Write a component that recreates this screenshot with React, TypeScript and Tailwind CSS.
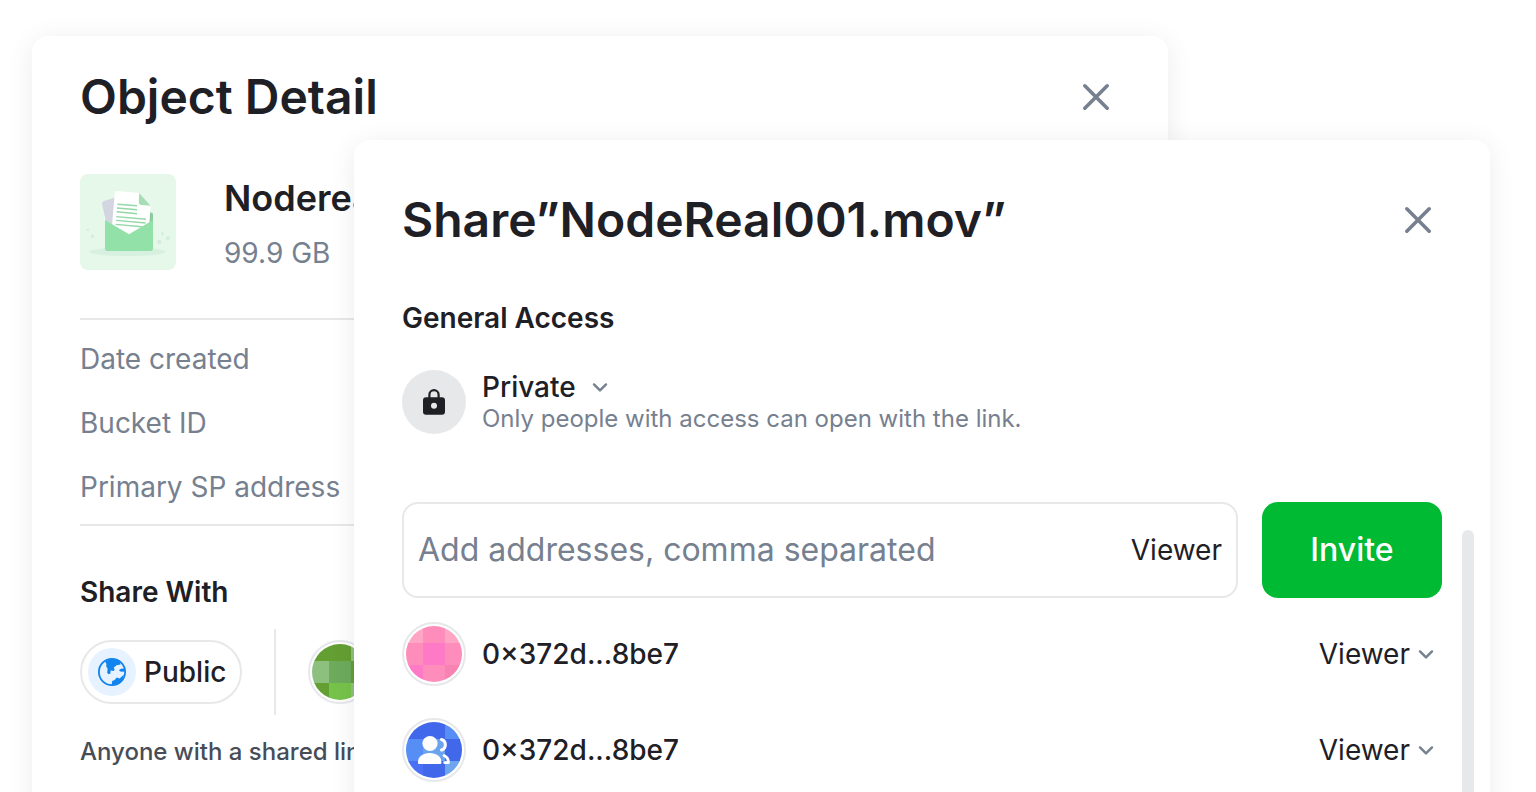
import { useId } from "react";
import type { ReactNode } from "react";

function CloseButton({ label }: { label: string }) {
  return (
    <button type="button" aria-label={label} className="flex size-12 shrink-0 items-center justify-center text-[#76808F]">
      <svg viewBox="0 0 48 48" className="size-12" fill="none" stroke="currentColor" strokeWidth="3.6" strokeLinecap="round">
        <path d="M12.800 12.800 35.200 35.200M35.200 12.800 12.800 35.200" />
      </svg>
    </button>
  );
}

function Chevron() {
  return (
    <svg viewBox="0 0 16 16" className="pointer-events-none col-start-1 row-start-1 size-4 justify-self-end text-[#76808F]" fill="none" stroke="currentColor" strokeWidth="2.4" strokeLinecap="round" strokeLinejoin="round">
      <path d="M2 5.400 8 11.400 14 5.400" />
    </svg>
  );
}

function FileThumbnail() {
  return (
    <svg viewBox="0 0 96 96" className="size-24 shrink-0 rounded-lg bg-[#E6F8EA]" aria-hidden="true">
      <ellipse cx="47.7" cy="77.8" rx="38" ry="4.4" fill="#D8F0DF" />
      <g fill="#D3EFDB">
        <circle cx="7.7" cy="55.8" r="1.3" />
        <circle cx="12.4" cy="62.3" r="1.8" />
        <circle cx="82.4" cy="59.7" r="1.6" />
        <circle cx="87.7" cy="64.2" r="2" />
        <circle cx="79.3" cy="68" r="2.3" />
      </g>
      <path d="M60 38.5H71q2 0 2 2V60H60Z" fill="#8CCB9F" />
      <path d="M23.8 27 35 23.7V52L26 47.5 22 30Q21.5 27.8 23.8 27Z" fill="#D3D6E0" />
      <path d="M36.6 17 59 19 70.6 31.5 69.2 52 49.5 62 32 52 34.8 18.5Q35 17 36.6 17Z" fill="#fff" />
      <path d="M59.2 19 70.6 31.8 61.5 31Q58.7 30.5 58.8 28Z" fill="#A5DDB5" />
      <path d="M37.4 30.2 57 31.800M37 34 57 35.800M36.6 37.8 57 39.800M36.2 42.6 66 45.2M36 46.4 65.6 49M35.6 50.4 62 52.8" stroke="#93D8A6" strokeWidth="1.4" />
      <path d="M25 46 49 60.3 73 46V75q0 2-2 2H27q-2 0-2-2Z" fill="#92E1A8" />
    </svg>
  );
}

function GlobeIcon() {
  return (
    <span className="flex size-12 items-center justify-center rounded-full bg-[#E6F2FF]">
      <svg viewBox="0 0 28 28" className="size-7" aria-hidden="true">
        <circle cx="14" cy="14" r="13.100" fill="none" stroke="#1184EE" strokeWidth="1.800" />
        <path fill="#1184EE" d="M7 3.500 8.400 6 8.200 8.500 9.600 10.500 9.200 15 10.800 16.200 12.400 15.600 12.600 12.400 15.800 13 16.600 11.600 15.800 9.600 18.600 7.200 22.500 6.600 22 3 13 .5ZM20.800 12.200 23 13.700 27 13.600 26.600 10.600 23 10.800ZM13.600 27.500 14.200 23 16.600 22 18.800 19.600 21.600 20.400 26 16.500 24 23 19 26.500Z" />
      </svg>
    </span>
  );
}

function LockIcon() {
  return (
    <span className="flex size-16 shrink-0 items-center justify-center rounded-full bg-[#E6E8EA]">
      <svg viewBox="0 0 32 32" className="size-8" aria-hidden="true">
        <path d="M11.400 13V8.800a4.600 4.600 0 0 1 9.200 0V13" fill="none" stroke="#1E2026" strokeWidth="2.200" />
        <path fillRule="evenodd" fill="#1E2026" d="M8 11.200H24q3 0 3 3V25.700q0 3-3 3H8q-3 0-3-3V14.200q0-3 3-3ZM16 16.800a3 3 0 1 0 0 6 3 3 0 0 0 0-6Z" />
      </svg>
    </span>
  );
}

/* Nine-cell identicon, cells listed row by row. */
function Identicon({ cells, children }: { cells: string[]; children?: ReactNode }) {
  const clip = useId();
  const starts = [0, 17, 39];
  const sizes = [17, 22, 17];
  return (
    <span className="flex size-16 shrink-0 items-center justify-center rounded-full border-2 border-[#E6E8EA] bg-white">
      <svg viewBox="0 0 56 56" className="size-14" aria-hidden="true">
        <clipPath id={clip}>
          <circle cx="28" cy="28" r="28" />
        </clipPath>
        <g clipPath={`url(#${clip})`} shapeRendering="crispEdges">
          {cells.map((fill, i) => (
            <rect key={i} x={starts[i % 3]} y={starts[Math.floor(i / 3)]} width={sizes[i % 3]} height={sizes[Math.floor(i / 3)]} fill={fill} />
          ))}
        </g>
        {children}
      </svg>
    </span>
  );
}

const green = ["#649F33", "#649F33", "#8DC07F", "#8DC07F", "#6EAB5C", "#649F33", "#649F33", "#76C34B", "#8DC07F"];
const pink = ["#FFA6C5", "#FF8DBB", "#FFA6C5", "#FF8DBB", "#FF7AC6", "#FF8DBB", "#FF7AC6", "#FF8DBB", "#F683B2"];
const blue = ["#4168EB", "#4168EB", "#568EF5", "#568EF5", "#6BA3EE", "#4168EB", "#4A71F5", "#4168EB", "#6EA5EF"];

function PeopleGlyph() {
  return (
    <g>
      <circle cx="24" cy="21.5" r="7.6" fill="#fff" />
      <path d="M12 41V40C12 34.500 17 31 23.700 31S35.400 34.500 35.400 40V41Q35.400 42 34.400 42H13Q12 42 12 41Z" fill="#fff" />
      <path d="M35.500 17.500A5.500 5.500 0 0 1 35.500 28" fill="none" stroke="#fff" strokeWidth="3" strokeLinecap="round" />
      <path d="M38 33.600C41 35 42.500 37.500 42.400 40.600H38.600" fill="none" stroke="#fff" strokeWidth="2.800" strokeLinecap="round" strokeLinejoin="round" />
    </g>
  );
}

function MemberRow({ address, cells, children }: { address: string; cells: string[]; children?: ReactNode }) {
  return (
    <li className="flex items-center gap-4">
      <Identicon cells={cells}>{children}</Identicon>
      <span className="flex-1 text-[28px] font-medium leading-[34px]">{address}</span>
      <span className="mr-2 grid items-center">
        <select aria-label={`Role for ${address}`} className="col-start-1 row-start-1 field-sizing-content appearance-none bg-transparent pr-6 text-[28px] leading-[34px]">
          <option>Viewer</option>
        </select>
        <Chevron />
      </span>
    </li>
  );
}

function ObjectDetail() {
  return (
    <section className="ml-8 mr-[368px] mt-9 min-h-screen rounded-2xl bg-white px-12 pt-8 shadow-[0_4px_28px_rgba(0,0,0,0.08)]">
      <header className="flex items-center justify-between">
        <h1 className="text-5xl font-semibold leading-[58px]">Object Detail</h1>
        <CloseButton label="Close object detail" />
      </header>
      <div className="mt-12 flex h-24 gap-12">
        <FileThumbnail />
        <div className="whitespace-nowrap">
          <h2 className="text-4xl font-semibold leading-[48px]">Nodereal</h2>
          <p className="mt-3 text-[28px] leading-[38px] text-[#76808F]">99.9 GB</p>
        </div>
      </div>
      <ul className="mt-12 flex flex-col gap-[30px] border-y-2 border-[#E6E8EA] pb-5 pt-[22px] text-[28px] leading-[34px] text-[#76808F]">
        <li>Date created</li>
        <li>Bucket ID</li>
        <li>Primary SP address</li>
      </ul>
      <h2 className="mt-[49px] text-[28px] font-semibold leading-[34px]">Share With</h2>
      <div className="mt-5 flex items-center gap-8">
        <div className="flex h-16 items-center gap-2 rounded-full border-2 border-[#E6E8EA] pl-[6px] pr-[14px] text-[28px] font-medium">
          <GlobeIcon />
          Public
        </div>
        <div className="h-[86px] w-0.5 bg-[#E6E8EA]" />
        <Identicon cells={green} />
      </div>
      <p className="mt-[22px] text-2xl font-medium leading-[30px] text-[#474D57]">Anyone with a shared link</p>
    </section>
  );
}

function ShareDialog() {
  return (
    <section role="dialog" aria-labelledby="share-title" className="absolute left-[354px] right-[46px] top-[140px] min-h-screen rounded-2xl bg-white px-12 pt-[51px] shadow-[0_4px_28px_rgba(0,0,0,0.08)]">
      <header className="flex items-center justify-between">
        <h1 id="share-title" className="text-5xl font-semibold leading-[58px]">Share”NodeReal001.mov”</h1>
        <CloseButton label="Close sharing" />
      </header>
      <h2 className="mt-[52px] text-[28px] font-semibold leading-[34px]">General Access</h2>
      <div className="mt-[35px] flex items-center gap-4">
        <LockIcon />
        <div>
          <span className="grid w-fit items-center">
            <select aria-label="General access" className="col-start-1 row-start-1 field-sizing-content appearance-none bg-transparent pr-8 text-[28px] font-medium leading-[34px]">
              <option>Private</option>
            </select>
            <Chevron />
          </span>
          <p className="text-2xl leading-[30px] text-[#76808F]">Only people with access can open with the link.</p>
        </div>
      </div>
      <form className="mt-[68px] flex gap-6">
        <div className="flex h-24 min-w-0 flex-1 items-center rounded-2xl border-2 border-[#E6E8EA] px-[14px]">
          <input aria-label="Addresses" placeholder="Add addresses, comma separated" className="min-w-0 flex-1 text-[32px] leading-[40px] outline-none placeholder:text-[#76808F]" />
          <select aria-label="Role" className="field-sizing-content appearance-none bg-transparent text-[28px] leading-[34px]">
            <option>Viewer</option>
          </select>
        </div>
        <button type="button" className="h-24 w-[180px] rounded-2xl bg-[#00BA34] text-[32px] font-medium text-white">Invite</button>
      </form>
      <ul className="mt-6 flex flex-col gap-8">
        <MemberRow address="0×372d...8be7" cells={pink} />
        <MemberRow address="0×372d...8be7" cells={blue}>
          <PeopleGlyph />
        </MemberRow>
      </ul>
      <div className="absolute bottom-0 right-4 top-[390px] w-3 rounded-full bg-[#E6E8EA]" />
    </section>
  );
}

export default function App() {
  return (
    <main className="relative flow-root h-screen overflow-hidden bg-white font-['Inter',sans-serif] text-[#1E2026]">
      <ObjectDetail />
      <ShareDialog />
    </main>
  );
}
